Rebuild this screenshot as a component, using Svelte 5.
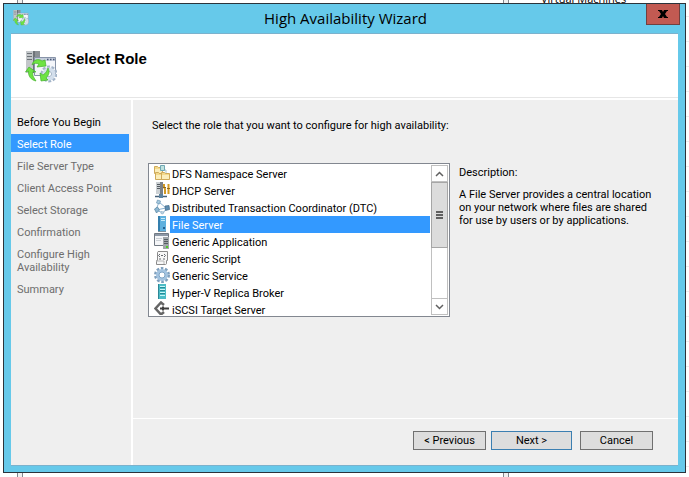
<script lang="ts">
	const steps = [
		'Before You Begin',
		'Select Role',
		'File Server Type',
		'Client Access Point',
		'Select Storage',
		'Confirmation',
		'Configure High Availability',
		'Summary'
	];
	const currentStep = 1;

	const roles = [
		{ name: 'DFS Namespace Server', icon: 'dfs' },
		{ name: 'DHCP Server', icon: 'dhcp' },
		{ name: 'Distributed Transaction Coordinator (DTC)', icon: 'dtc' },
		{ name: 'File Server', icon: 'file' },
		{ name: 'Generic Application', icon: 'app' },
		{ name: 'Generic Script', icon: 'script' },
		{ name: 'Generic Service', icon: 'service' },
		{ name: 'Hyper-V Replica Broker', icon: 'hyperv' },
		{ name: 'iSCSI Target Server', icon: 'iscsi' }
	];

	let selected = $state('File Server');
	let list: HTMLElement;

	function scrollRoles(rows: number) {
		list.scrollTop += rows * 17;
	}
</script>

{#snippet wizardIcon()}
	<svg class="wizard-icon" viewBox="0 0 32 32" aria-hidden="true">
		<path d="M1 0h14v22H1z" fill="#8b9095" />
		<path d="M1 0h7v22H1z" fill="#c3c7ca" />
		<path d="M2 2.5h5M2 5.5h5M2 8.5h5" stroke="#6d7378" />
		<path d="M8 0h2v22H8z" fill="#6d7378" />
		<path d="M9.5 6.5h21v18h-21z" fill="#f4f6fa" stroke="#8793a8" />
		<path d="M10 7h20v3H10z" fill="#c5cddc" />
		<path d="M22 8.5h1.5M25 8.5h1.5M28 8.5h1.5" stroke="#4b5a78" stroke-width="1.5" />
		<circle cx="24" cy="23" r="7" fill="none" stroke="#a3b4c8" stroke-width="3" stroke-dasharray="2.8 1.6" />
		<circle cx="24" cy="23" r="4.8" fill="#f5f9fe" stroke="#d3dfec" stroke-width="3.4" />
		<circle cx="24" cy="23" r="2.6" fill="#fff" stroke="#8ea3ba" stroke-width=".8" />
		<path d="M7 14c1-5 6-7 10-4l3-1 1 6-9 1 2-3c-3-1-5-1-7 1z" fill="#6ee343" stroke="#43b22b" stroke-width=".7" />
		<path d="M11 30c-5-1-8-5-7.5-10L.5 21 4 16l7 5-3-.5c-1 4 1 6 3 9.5z" fill="#6ee343" stroke="#43b22b" stroke-width=".7" />
		<path d="M23 17c2 4 1 7-2 10l2 2-7 1-1-8 3 2c3-2 4-4 5-7z" fill="#6ee343" stroke="#43b22b" stroke-width=".7" />
	</svg>
{/snippet}

{#snippet folder(x: number, y: number)}
	<g transform="translate({x} {y})">
		<path d="M.5 1.5h3l1 1h4v6h-8z" fill="#f3d98b" stroke="#cfab5a" />
		<path d="M1 4h7v4H1z" fill="#fbeebb" />
	</g>
{/snippet}

{#snippet roleIcon(kind: string)}
	<svg class="role-icon" viewBox="0 0 16 16" aria-hidden="true">
		{#if kind === 'dfs'}
			<path d="M6 9V5h6v4" fill="none" stroke="#a9c3c9" />
			{@render folder(0, 0)}
			<path d="M6.5 .5h4v5h-4z" fill="#bfe2de" stroke="#70a8b5" />
			{@render folder(1, 6)}
			{@render folder(7, 6)}
		{:else if kind === 'dhcp'}
			<path d="M2 0h7v12H2z" fill="#7b8187" />
			<path d="M2 0h4v12H2z" fill="#cbd0d3" />
			<path d="M3 2.5h3M3 4.5h3M3 6.5h3" stroke="#555c62" />
			<path d="M7 12v2M1 14.5h12" stroke="#45617a" stroke-width="1.5" />
			<path d="M5 12h4v4H5z" fill="#5d839f" />
			<path d="M10 2v3l1 2v5M14.5 2v10" fill="none" stroke="#d39a22" stroke-width="2" />
			<path d="M9 5.5h3M13 6.5h3" stroke="#8c681d" />
		{:else if kind === 'dtc'}
			<path d="M5 3l-3 8 10-2-7-6M2 11l7 3 4-5" fill="none" stroke="#8db4d2" />
			<path d="M3.5 1l3 1-1 3-3-1z" fill="#a9cbe0" stroke="#6c97b5" stroke-width=".7" />
			<path d="M.5 10l3-2 2 3-3 3z" fill="#8db7d2" stroke="#527f9c" stroke-width=".7" />
			<path d="M11 7l4-.5.5 4-4 1z" fill="#5e8db0" stroke="#3f6785" stroke-width=".7" />
			<path d="M7 12.5l3 .5-1 2-2-.5z" fill="#c6dbe8" stroke="#8fb0c7" stroke-width=".7" />
		{:else if kind === 'file'}
			<path d="M4 0h8v15H4z" fill="#5eb0de" />
			<path d="M4 0h2v15H4z" fill="#347fae" />
			<path d="M7 2.5h4M7 4.5h4" stroke="#c6ebfa" />
			<path d="M9 11h2v2H9z" fill="#225f8e" />
			<path d="M4 15.5h8" stroke="#7c929f" />
		{:else if kind === 'app'}
			<path d="M.5 .5h14v12H.5z" fill="#f5f6f8" stroke="#717983" />
			<path d="M1 1h13v2H1z" fill="#8d98a6" />
			<path d="M2 5.5h6M2 7.5h5" stroke="#cbd0d5" />
			<path d="M9 4h6v12H9z" fill="#a0a6aa" />
			<path d="M10 6.5h4M10 8.5h4M10 10.5h4" stroke="#555d62" />
			<path d="M12 13h2v2h-2z" fill="#4ccb25" />
		{:else if kind === 'script'}
			<path d="M4 1.5h9.5v9h-1v3c0 1-1 1-1 1h-9v-4h1v-8c0-1 1-1 1-1z" fill="#f7f7f7" stroke="#8b8b8b" />
			<path d="M2 11h8v3" fill="none" stroke="#b7b7b7" />
			<path d="M6 4L4.5 5.5 6 7M10 4l1.5 1.5L10 7M7 5.5h2M5 9h2M9 9h2" fill="none" stroke="#676b70" />
		{:else if kind === 'service'}
			<circle cx="8" cy="8" r="6.5" fill="none" stroke="#7f9fbd" stroke-width="3" stroke-dasharray="2.5 1.6" />
			<circle cx="8" cy="8" r="4.5" fill="none" stroke="#a4c4e0" stroke-width="3" />
			<circle cx="8" cy="8" r="3" fill="#fff" stroke="#7fa5c6" />
		{:else if kind === 'hyperv'}
			<path d="M4 0h8v15H4z" fill="#4cbcc6" />
			<path d="M4 0h1v15H4z" fill="#2d8797" />
			<path d="M6 2.5h5M6 5.5h5M6 8.5h5M6 11.5h5" stroke="#c7f6f7" />
			<path d="M6 3.5h5M6 6.5h5M6 9.5h5" stroke="#258b99" />
		{:else}
			<path d="M10 4L7 1.5 1.5 7.5 7 13.5 10 11" fill="none" stroke="#666" stroke-width="2.5" />
			<path d="M6 7.5h9M9 5.5v4" fill="none" stroke="#3f3f3f" stroke-width="2" />
		{/if}
	</svg>
{/snippet}

<div class="desktop">
	<div class="console" aria-hidden="true">
		<div class="pane tree"></div>
		<div class="pane content"></div>
		<div class="pane actions"><span>Virtual Machines</span></div>
	</div>

	<main class="window">
		<header class="titlebar">
			{@render wizardIcon()}
			<h1>High Availability Wizard</h1>
			<button class="close" type="button" aria-label="Close">
				<svg viewBox="0 0 10 8" aria-hidden="true">
					<path d="M0 0h4l1 2 1-2h4v1H9L7 4l2 3h1v1H6L5 6 4 8H0V7h1l2-3-2-3H0z" />
				</svg>
			</button>
		</header>

		<div class="client">
			<div class="banner">
				{@render wizardIcon()}
				<h2>Select Role</h2>
			</div>

			<div class="body">
				<nav class="steps" aria-label="Wizard steps">
					{#each steps as step, i}
						<div class="step" class:visited={i < currentStep} class:current={i === currentStep}>{step}</div>
					{/each}
				</nav>

				<div class="page">
					<section class="choice">
						<p class="prompt" id="prompt">Select the role that you want to configure for high availability:</p>
						<div class="columns">
							<div class="role-box">
								<div class="roles" role="listbox" aria-labelledby="prompt" bind:this={list}>
									{#each roles as role}
										<button
											class="role"
											class:selected={selected === role.name}
											type="button"
											role="option"
											aria-selected={selected === role.name}
											onclick={() => (selected = role.name)}
										>
											{@render roleIcon(role.icon)}
											<span>{role.name}</span>
										</button>
									{/each}
								</div>
								<div class="scrollbar">
									<button type="button" aria-label="Scroll up" onclick={() => scrollRoles(-1)}>
										<svg viewBox="0 0 9 6" aria-hidden="true"><path d="M1 5l3.5-3.5L8 5" /></svg>
									</button>
									<div class="thumb"><i></i><i></i><i></i></div>
									<button type="button" aria-label="Scroll down" onclick={() => scrollRoles(1)}>
										<svg viewBox="0 0 9 6" aria-hidden="true"><path d="M1 1l3.5 3.5L8 1" /></svg>
									</button>
								</div>
							</div>

							<div class="description">
								<h3>Description:</h3>
								<p>A File Server provides a central location on your network where files are shared for use by users or by applications.</p>
							</div>
						</div>
					</section>

					<footer class="actions-bar">
						<button type="button">&lt; Previous</button>
						<button class="default" type="button">Next &gt;</button>
						<button class="cancel" type="button">Cancel</button>
					</footer>
				</div>
			</div>
		</div>
	</main>
</div>

<style>
	:global(body) {
		background: #fff;
		color: #000;
		font: 11px/13px Roboto, 'Liberation Sans', sans-serif;
	}

	* {
		box-sizing: border-box;
	}

	h1,
	h2,
	h3,
	p {
		margin: 0;
		font-size: inherit;
		font-weight: 400;
	}

	button {
		padding: 0;
		color: inherit;
		font: inherit;
	}

	.desktop {
		position: relative;
		display: flex;
		min-height: 100vh;
		padding: 3px 3px 4px;
	}

	.console {
		position: absolute;
		inset: 0;
		display: grid;
		grid-template-columns: 18px 1fr 181px;
		gap: 4px;
		overflow: hidden;
		background: #f0f0f0;
	}

	.pane {
		border: solid #828790;
		border-width: 0 1px;
		background: #fff;
	}

	.tree {
		border-left: 0;
	}

	.actions {
		position: relative;
		border-right: 0;
		background: repeating-linear-gradient(#fff 0 16px, #ececec 16px 17px, #fff 17px 25px);
	}

	.actions span {
		position: absolute;
		bottom: calc(100% - 7px);
		left: 32px;
		font: 11px/16px 'Open Sans', sans-serif;
	}

	.window {
		position: relative;
		display: flex;
		flex: 1;
		flex-direction: column;
		min-width: 0;
		padding: 0 7px 6px;
		border: 1px solid #2b333b;
		background: #66c9ea;
	}

	.titlebar {
		display: grid;
		grid-template-columns: 34px 1fr 34px;
		height: 29px;
		margin-right: -2px;
	}

	.titlebar .wizard-icon {
		width: 16px;
		height: 16px;
		margin: 6px 0 0 2px;
	}

	.titlebar h1 {
		font: 15px/28px 'Open Sans', sans-serif;
		text-align: center;
	}

	.close {
		height: 21px;
		border: 1px solid #71403f;
		border-top: 0;
		background: #c25a52;
	}

	.close svg {
		display: block;
		width: 10px;
		height: 8px;
		margin: auto;
	}

	.client {
		display: flex;
		flex: 1;
		flex-direction: column;
		border: solid #7bb2cd;
		border-width: 1px 0;
		background: #fff;
	}

	.banner {
		display: flex;
		gap: 9px;
		height: 64px;
		padding: 17px 14px 0;
		border-bottom: 1px solid #e6e6e6;
	}

	.banner .wizard-icon {
		width: 32px;
		height: 32px;
	}

	.banner h2 {
		font: bold 15px/16px 'Liberation Sans', sans-serif;
	}

	.body {
		display: grid;
		flex: 1;
		grid-template-columns: 120px minmax(0, 1fr);
		gap: 2px;
		padding-top: 2px;
	}

	.steps {
		display: flex;
		flex-direction: column;
		gap: 4px;
		padding: 12px 2px 0 0;
		background: #efefef;
		color: #6d6d6d;
	}

	.step {
		padding: 4px 8px 1px 6px;
	}

	.step.visited {
		color: #000;
	}

	.step.current {
		background: #39f;
		color: #fff;
	}

	.page {
		display: flex;
		flex-direction: column;
		background: #efefef;
	}

	.choice {
		flex: 1;
		padding: 19px 25px 12px 15px;
	}

	.prompt {
		padding-left: 4px;
	}

	.columns {
		display: grid;
		grid-template-columns: minmax(0, 1fr) 194px;
		gap: 9px;
		margin-top: 31px;
	}

	.role-box {
		display: flex;
		gap: 1px;
		height: 154px;
		padding: 1px;
		border: 1px solid #828790;
		background: #fff;
	}

	.roles {
		flex: 1;
		min-width: 0;
		overflow-y: auto;
		scrollbar-width: none;
	}

	.role {
		display: flex;
		width: 100%;
		height: 17px;
		padding-left: 4px;
		border: 0;
		background: none;
		text-align: left;
	}

	.role-icon {
		flex: none;
		width: 16px;
		height: 16px;
	}

	.role span {
		flex: 1;
		padding: 2px 0 0 2px;
		line-height: 15px;
		white-space: nowrap;
	}

	.role.selected span {
		background: #39f;
		color: #fff;
	}

	.scrollbar {
		display: flex;
		flex-direction: column;
		width: 17px;
		border: solid #c0c0c0;
		border-width: 0 1px;
	}

	.scrollbar button {
		display: grid;
		place-items: center;
		height: 17px;
		border: solid #c0c0c0;
		border-width: 1px 0;
		background: #fff;
	}

	.scrollbar button:last-child {
		margin-top: auto;
	}

	.scrollbar svg {
		width: 9px;
		height: 6px;
		fill: none;
		stroke: #606060;
		stroke-width: 1.5;
	}

	.thumb {
		display: flex;
		flex-direction: column;
		align-items: center;
		justify-content: center;
		gap: 1px;
		height: 66px;
		margin: 0 -1px;
		border: 1px solid #a6a6a6;
		background: #dcdcdc;
	}

	.thumb i {
		width: 7px;
		height: 2px;
		background: #606060;
	}

	.description {
		padding: 3px 0;
	}

	.description p {
		margin-top: 9px;
	}

	.actions-bar {
		display: flex;
		justify-content: flex-end;
		gap: 5px;
		padding: 12px 25px 15px;
		border-top: 1px solid #fff;
	}

	.actions-bar button {
		width: 73px;
		height: 19px;
		border: 1px solid #707070;
		background: #ddd;
	}

	.actions-bar .default {
		width: 81px;
		border-color: #3c7fb1;
	}

	.actions-bar .cancel {
		margin-left: 3px;
	}
</style>
